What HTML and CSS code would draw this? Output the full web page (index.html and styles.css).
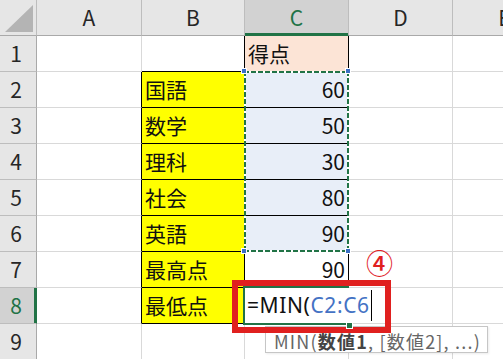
FILE: index.html
```html
<!DOCTYPE html>
<html lang="ja">
<head>
<meta charset="utf-8">
<link rel="stylesheet" href="styles.css">
</head>
<body>
<div class="sheet">
  <div class="grid">
    <div class="c ch corner"><svg width="36" height="35" viewBox="0 0 36 35"><polygon points="33,5 33,32 5,32" fill="#b4b4b4"/></svg></div>
    <div class="c ch">A</div>
    <div class="c ch">B</div>
    <div class="c ch sel-col">C</div>
    <div class="c ch">D</div>
    <div class="c ch">E</div>

    <div class="c rh">1</div>
    <div class="c"></div>
    <div class="c bk-r bk-b"></div>
    <div class="c peach bk-r bk-b">得点</div>
    <div class="c"></div>
    <div class="c"></div>

    <div class="c rh">2</div>
    <div class="c bk-r"></div>
    <div class="c yel bk-r bk-b">国語</div>
    <div class="c blu bk-r bk-b num">60</div>
    <div class="c"></div>
    <div class="c"></div>

    <div class="c rh">3</div>
    <div class="c bk-r"></div>
    <div class="c yel bk-r bk-b">数学</div>
    <div class="c blu bk-r bk-b num">50</div>
    <div class="c"></div>
    <div class="c"></div>

    <div class="c rh">4</div>
    <div class="c bk-r"></div>
    <div class="c yel bk-r bk-b">理科</div>
    <div class="c blu bk-r bk-b num">30</div>
    <div class="c"></div>
    <div class="c"></div>

    <div class="c rh">5</div>
    <div class="c bk-r"></div>
    <div class="c yel bk-r bk-b">社会</div>
    <div class="c blu bk-r bk-b num">80</div>
    <div class="c"></div>
    <div class="c"></div>

    <div class="c rh">6</div>
    <div class="c bk-r"></div>
    <div class="c yel bk-r bk-b">英語</div>
    <div class="c blu bk-r bk-b num">90</div>
    <div class="c"></div>
    <div class="c"></div>

    <div class="c rh">7</div>
    <div class="c bk-r"></div>
    <div class="c yel bk-r bk-b">最高点</div>
    <div class="c bk-r bk-b num">90</div>
    <div class="c"></div>
    <div class="c"></div>

    <div class="c rh sel-row">8</div>
    <div class="c bk-r"></div>
    <div class="c yel bk-r bk-b">最低点</div>
    <div class="c active"><span class="edit">=MIN(<span class="ref">C2:C6</span><span class="caret"></span></span></div>
    <div class="c"></div>
    <div class="c"></div>

    <div class="c rh">9</div>
    <div class="c"></div>
    <div class="c"></div>
    <div class="c"></div>
    <div class="c"></div>
    <div class="c"></div>
  </div>

  <div class="ants"></div>
  <div class="handle h-tl"></div>
  <div class="handle h-tr"></div>
  <div class="handle h-bl"></div>
  <div class="handle h-br"></div>

  <div class="tip">MIN(<b>数値1</b>, [数値2], ...)</div>
  <div class="redbox"></div>
  <div class="mark">④</div>
</div>
</body>
</html>
```

FILE: styles.css
```css
html, body {
  margin: 0;
  padding: 0;
  background: #fff;
}

.sheet {
  position: relative;
  width: 503px;
  height: 359px;
  overflow: hidden;
  font-family: "Noto Sans CJK JP", "Noto Sans", sans-serif;
}

.grid {
  display: grid;
  grid-template-columns: 37px 105px 103px 104px 104px 104px;
  grid-template-rows: repeat(10, 36px);
  width: 557px;
}

.c {
  box-sizing: border-box;
  border-right: 1px solid #d9d9d9;
  border-bottom: 1px solid #d9d9d9;
  display: flex;
  align-items: center;
  padding: 0 3px;
  font-size: 21px;
  line-height: 1;
  color: #111;
  white-space: nowrap;
  min-width: 0;
}

.ch {
  background: #e6e6e6;
  border-right-color: #bdbdbd;
  border-bottom-color: #a9a9a9;
  justify-content: center;
  color: #262626;
  padding: 0;
}

.corner {
  align-items: stretch;
  justify-content: flex-start;
}

.corner svg {
  display: block;
}

.rh {
  background: #e6e6e6;
  border-right-color: #a9a9a9;
  border-bottom-color: #bdbdbd;
  justify-content: center;
  color: #262626;
  padding: 0 4px 0 0;
}

.sel-col {
  background: #d2d2d2;
  color: #217346;
  box-shadow: inset 0 -2px 0 #217346;
  border-bottom-color: #217346;
}

.sel-row {
  background: #d2d2d2;
  color: #217346;
  box-shadow: inset -2px 0 0 #217346;
  border-right-color: #217346;
}

.bk-r { border-right-color: #000; }
.bk-b { border-bottom-color: #000; }

.yel { background: #ffff00; }
.peach { background: #fce4d6; }
.blu { background: #e8eef8; }

.num {
  justify-content: flex-end;
}

.active {
  position: relative;
  overflow: visible;
  border-right-color: transparent;
  padding-left: 2px;
  z-index: 2;
}

.active::before {
  content: "";
  position: absolute;
  left: -2px;
  top: -2px;
  width: 106px;
  height: 39px;
  border: 2px solid #217346;
  border-right: none;
  box-sizing: border-box;
  pointer-events: none;
}

.active::after {
  content: "";
  position: absolute;
  left: 101px;
  top: 34px;
  width: 5px;
  height: 5px;
  background: #217346;
  border: 1px solid #fff;
}

.edit {
  background: #fff;
  padding-right: 3px;
  display: flex;
  align-items: center;
  height: 33px;
  color: #111;
  font-family: "Noto Sans", "Noto Sans CJK JP", sans-serif;
  font-size: 21px;
  letter-spacing: 0.6px;
}

.ref {
  color: #4472c4;
}

.caret {
  display: inline-block;
  width: 1px;
  height: 31px;
  background: #000;
  margin-left: 1px;
}

.ants {
  position: absolute;
  left: 244px;
  top: 71px;
  width: 105px;
  height: 181px;
  background:
    repeating-linear-gradient(90deg, #217346 0 5px, #fff 5px 7px) left top / 100% 2px no-repeat,
    repeating-linear-gradient(90deg, #217346 0 5px, #fff 5px 7px) left bottom / 100% 2px no-repeat,
    repeating-linear-gradient(180deg, #217346 0 5px, #fff 5px 7px) left top / 2px 100% no-repeat,
    repeating-linear-gradient(180deg, #217346 0 5px, #fff 5px 7px) right top / 2px 100% no-repeat;
}

.handle {
  position: absolute;
  width: 4px;
  height: 4px;
  background: #3b6fc4;
  border: 1px solid #fff;
}

.h-tl { left: 241px; top: 68px; }
.h-tr { left: 345px; top: 68px; }
.h-bl { left: 241px; top: 248px; }
.h-br { left: 345px; top: 248px; }

.tip {
  position: absolute;
  left: 265px;
  top: 326px;
  width: 223px;
  height: 27px;
  box-sizing: border-box;
  border: 1px solid #c6c6c6;
  background: #fff;
  color: #666;
  font-size: 18px;
  letter-spacing: 1.2px;
  line-height: 1;
  padding: 3px 0 0 8px;
  display: flex;
  align-items: center;
  white-space: nowrap;
  box-shadow: 1px 1px 2px rgba(0,0,0,0.08);
}

.tip b {
  color: #444;
  font-weight: 700;
}

.redbox {
  position: absolute;
  left: 232px;
  top: 280px;
  width: 159px;
  height: 53px;
  box-sizing: border-box;
  border: 6px solid #e0201f;
}

.mark {
  position: absolute;
  left: 366px;
  top: 249px;
  font-size: 27px;
  font-weight: 500;
  line-height: 1;
  color: #e0201f;
}
```
